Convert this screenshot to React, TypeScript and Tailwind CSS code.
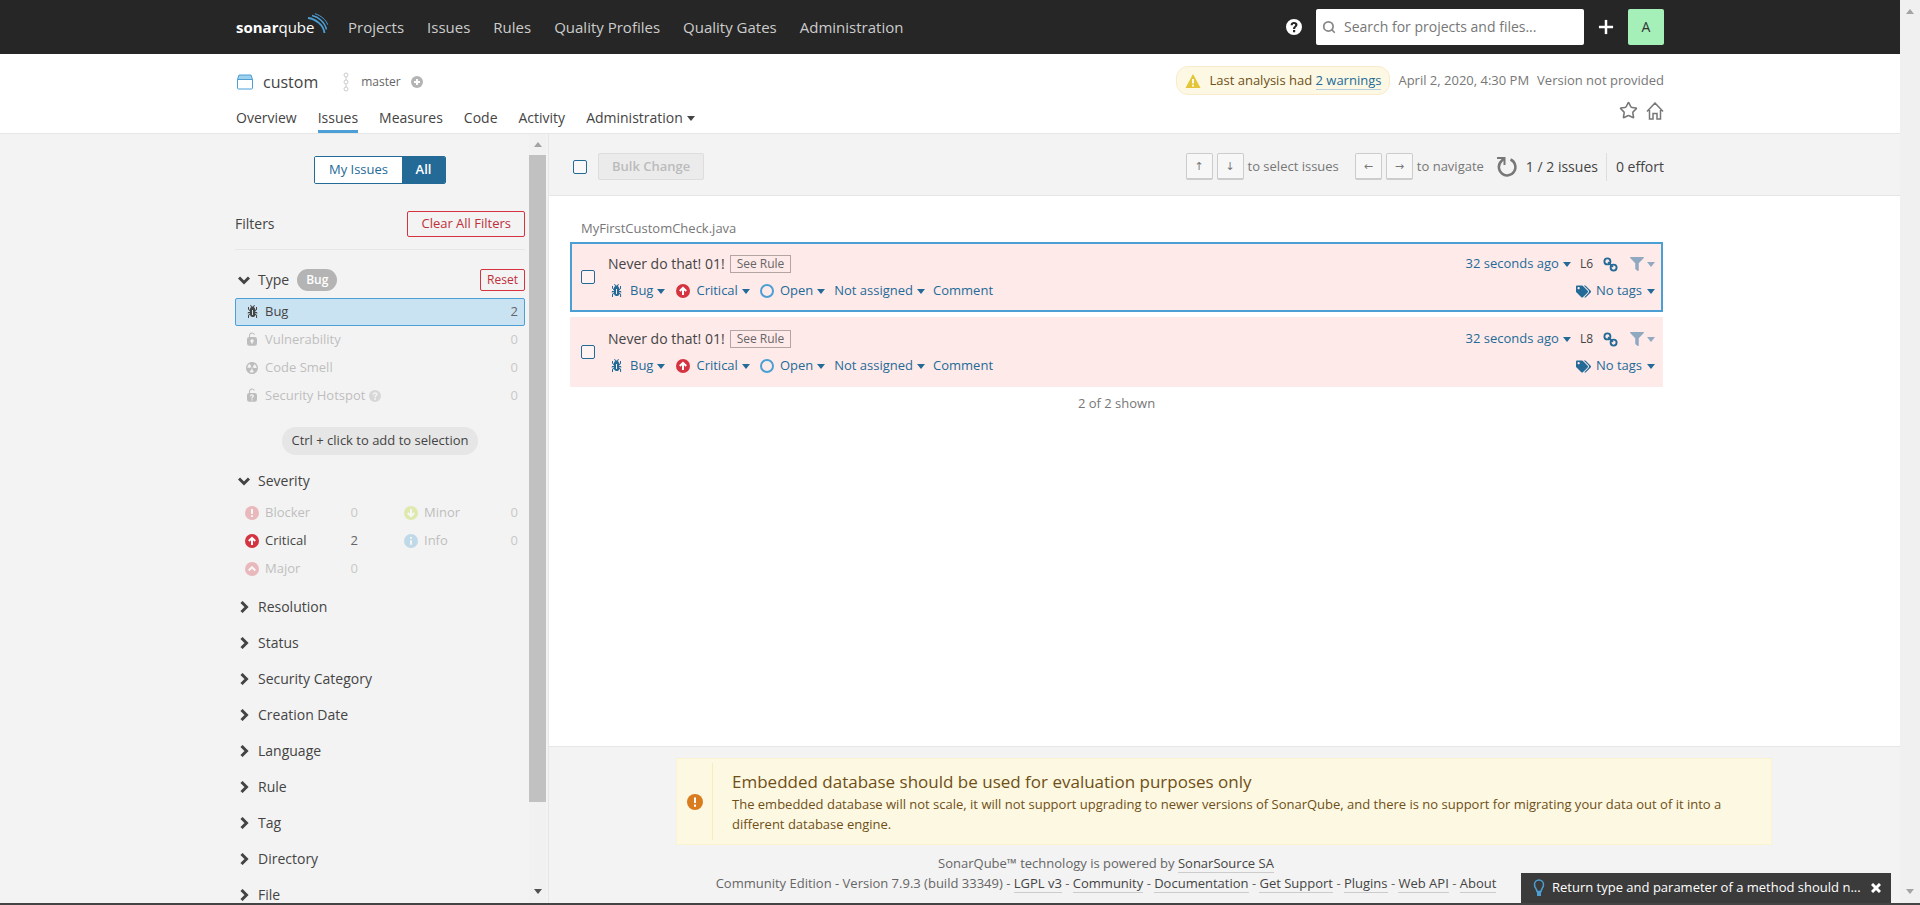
import React, { useState } from 'react';
import { FaFilter, FaTags } from 'react-icons/fa';
import { Search, Plus, Star } from 'lucide-react';

const mainNav = ['Projects', 'Issues', 'Rules', 'Quality Profiles', 'Quality Gates', 'Administration'];
const projectTabs = ['Overview', 'Issues', 'Measures', 'Code', 'Activity'];
const closedFacets = [
  'Resolution',
  'Status',
  'Security Category',
  'Creation Date',
  'Language',
  'Rule',
  'Tag',
  'Directory',
  'File',
];
const footerLinks = ['LGPL v3', 'Community', 'Documentation', 'Get Support', 'Plugins', 'Web API', 'About'];
const issues = [
  { id: 1, message: 'Never do that! 01!', age: '32 seconds ago', line: 'L6' },
  { id: 2, message: 'Never do that! 01!', age: '32 seconds ago', line: 'L8' },
];

type IconProps = { className?: string };

const Svg = ({ className = '', size = 'size-4', children }: IconProps & { size?: string; children: React.ReactNode }) => (
  <svg viewBox="0 0 16 16" className={`shrink-0 ${size} ${className}`} fill="currentColor" aria-hidden="true">
    {children}
  </svg>
);

const BugIcon = () => (
  <Svg>
    <path d="M11 9h1.3l.5.8.8-.5-.8-1.3H11v-.3l2-2.3V3h-1v2l-1 1.2V5c-.1-.8-.7-1.5-1.4-1.9L11 1.8l-.7-.7-1.8 1.6-1.8-1.6-.7.7 1.5 1.3C6.7 3.5 6.1 4.2 6 5v1.1L5 5V3H4v2.3l2 2.3V8H4.2l-.7 1.2.8.5.4-.7H6v.3l-2 1.9V14h1v-2.4l1-1C6 12 7.1 13 8.4 13h.8c.7 0 1.4-.3 1.8-.9.3-.4.3-.9.2-1.4l.9.9V14h1v-2.8l-2-1.9V9zm-2 2H8V6h1v5z" />
  </Svg>
);

const VulnerabilityIcon = () => (
  <Svg>
    <path d="M10.8 5H6V3.9a2.28 2.28 0 0 1 2-2.5 2.22 2.22 0 0 1 1.8 1.2.48.48 0 0 0 .7.2.48.48 0 0 0 .1-.7A3 3 0 0 0 8 .4a3.34 3.34 0 0 0-3 3.5v1.2a2.16 2.16 0 0 0-2 2.1v4.4a2.22 2.22 0 0 0 2.2 2.2h5.6a2.22 2.22 0 0 0 2.2-2.2V7.2A2.22 2.22 0 0 0 10.8 5zm-2.2 5.5v1.2H7.4v-1.2a1.66 1.66 0 0 1-1.1-1.6A1.75 1.75 0 0 1 8 7.2a1.71 1.71 0 0 1 .6 3.3z" />
  </Svg>
);

const CodeSmellIcon = () => (
  <Svg>
    <path d="M8 2C4.7 2 2 4.7 2 8s2.7 6 6 6 6-2.7 6-6-2.7-6-6-6zm-.5 5.5h.9v.9h-.9v-.9zm-3.8.2c-.1 0-.2-.1-.2-.2 0-.4.1-1.2.6-2S5.3 4.2 5.6 4c.2 0 .3 0 .3.1l1.3 2.3c0 .1 0 .2-.1.2-.1.2-.2.3-.3.5-.1.2-.2.4-.2.5 0 .1-.1.2-.2.2l-2.7-.1zM9.9 12c-.3.2-1.1.5-2 .5-.9 0-1.7-.3-2-.5-.1 0-.1-.2-.1-.3l1.3-2.3c0-.1.1-.1.2-.1.2.1.3.1.5.1s.4 0 .5-.1c.1 0 .2 0 .2.1l1.3 2.3c.2.2.2.3.1.3zm2.5-4.1L9.7 8c-.1 0-.2-.1-.2-.2 0-.2-.1-.4-.2-.5 0-.1-.2-.3-.3-.4-.1 0-.1-.1-.1-.2l1.3-2.3c.1-.1.2-.1.3-.1.3.2 1 .7 1.5 1.5s.6 1.6.6 2c0 0-.1.1-.2.1z" />
  </Svg>
);

const HotspotIcon = () => (
  <Svg>
    <path
      fillRule="evenodd"
      d="M10.8 5H6V3.9a2.3 2.3 0 0 1 2-2.5 2.2 2.2 0 0 1 1.8 1.2.5.5 0 0 0 .8-.5A3 3 0 0 0 8 .4a3.3 3.3 0 0 0-3 3.5v1.2a2.2 2.2 0 0 0-2 2.1v4.4a2.2 2.2 0 0 0 2.2 2.2h5.6a2.2 2.2 0 0 0 2.2-2.2V7.2A2.2 2.2 0 0 0 10.8 5zM7.4 11.2h1.2v1.2H7.4zM6 8.2C6 7 6.9 6.3 8 6.3s2 .7 2 1.8c0 1.2-1.4 1.3-1.4 2.3H7.4c0-1.6 1.3-1.6 1.3-2.3 0-.4-.3-.6-.7-.6s-.8.2-.8.7z"
    />
  </Svg>
);

const HelpIcon = ({ size, className }: IconProps & { size?: string }) => (
  <Svg size={size} className={className}>
    <path
      fillRule="evenodd"
      d="M8 0a8 8 0 1 1 0 16A8 8 0 0 1 8 0zM7 11v2.2h2.2V11zM4.6 6.2h2.1c0-.8.5-1.3 1.3-1.3.7 0 1.2.4 1.2 1 0 1.2-2.2 1.4-2.2 3.6v.4h2.1c0-1.7 2.4-1.8 2.4-4.1C11.5 4 10 3 8.1 3 6 3 4.6 4.2 4.6 6.2z"
    />
  </Svg>
);

const severityGlyphs = {
  Blocker: 'M8 4v5M8 10.3v1.7',
  Critical: 'M8 12V5M4.8 8L8 4.8 11.2 8',
  Major: 'M4.7 9.5L8 6.2l3.3 3.3',
  Minor: 'M8 4v7M4.8 8L8 11.2 11.2 8',
  Info: 'M8 4v1.7M8 7.3v4.5',
};

const severityColors = {
  Blocker: 'text-[#d4333f]',
  Critical: 'text-[#d4333f]',
  Major: 'text-[#d4333f]',
  Minor: 'text-[#b0d513]',
  Info: 'text-[#4b9fd5]',
};

type Severity = keyof typeof severityGlyphs;

const SeverityIcon = ({ severity }: { severity: Severity }) => (
  <Svg className={severityColors[severity]}>
    <circle cx="8" cy="8" r="7" />
    <path d={severityGlyphs[severity]} fill="none" stroke="#fff" strokeWidth="2" />
  </Svg>
);

const LinkIcon = () => (
  <Svg size="size-[15px]">
    <g fill="none" stroke="currentColor" strokeWidth="2">
      <circle cx="4.7" cy="4.7" r="3.2" />
      <circle cx="11.3" cy="11.3" r="3.2" />
      <path d="M5.5 5.5l5 5" />
    </g>
  </Svg>
);

const Caret = ({ className = '' }: IconProps) => (
  <svg viewBox="0 0 8 5" className={`h-[5px] w-2 shrink-0 ${className}`} fill="currentColor" aria-hidden="true">
    <path d="M0 0h8L4 5z" />
  </svg>
);

const Chevron = ({ open = false }: { open?: boolean }) => (
  <svg viewBox="0 0 12 12" className="size-3 shrink-0" fill="none" stroke="currentColor" strokeWidth="3" aria-hidden="true">
    <path d={open ? 'M1 3.5l5 5 5-5' : 'M3.5 1l5 5-5 5'} />
  </svg>
);

const Checkbox = ({ label }: { label: string }) => (
  <input
    type="checkbox"
    aria-label={label}
    className="size-[14px] shrink-0 appearance-none rounded-xs border border-[#236a97] bg-white/40 checked:bg-[#236a97]"
  />
);

const Header = () => (
  <header className="h-[54px] shrink-0 bg-[#262626]">
    <div className="mx-auto flex h-full max-w-[1428px] items-center">
      <a href="#" className="mr-5 flex h-6 w-[92px] items-center text-[15px] leading-6 text-white">
        <span className="font-bold">sonar</span>
        <span>qube</span>
        <svg viewBox="0 0 22 20" className="-mt-2 -ml-[7px] h-5 w-[22px] shrink-0" fill="none" stroke="#4b9fd5" aria-hidden="true">
          <path d="M1 5C9 6 16.5 12 17.5 20" strokeWidth="1.8" />
          <path d="M5 2.5c7 1.5 13 7 14.5 14" strokeWidth="1.4" />
          <path d="M8 .7c6 2 11 6 12.7 11" strokeWidth="1" />
        </svg>
      </a>
      <nav className="flex items-center gap-[23px] text-[15px] text-[#ccc]">
        {mainNav.map((item) => (
          <a key={item} href="#">{item}</a>
        ))}
      </nav>
      <div className="ml-auto flex items-center">
        <button aria-label="Help" className="mr-[14px] text-white">
          <HelpIcon />
        </button>
        <label className="flex h-9 w-[268px] items-center gap-2 rounded-xs bg-white px-[6px] text-[#888]">
          <Search className="size-[14px]" strokeWidth={3} />
          <input
            type="text"
            placeholder="Search for projects and files..."
            aria-label="Search for projects and files"
            className="min-w-0 flex-1 text-sm outline-none placeholder:text-[#777]"
          />
        </label>
        <button aria-label="Create" className="mx-3 text-white">
          <Plus className="size-5" strokeWidth={3} strokeLinecap="square" />
        </button>
        <button aria-label="Account" className="size-9 rounded-xs bg-[#a5f0b9] text-sm text-[#333]">A</button>
      </div>
    </div>
  </header>
);

const ProjectHeader = () => (
  <div className="h-20 shrink-0 border-b border-[#e6e6e6] bg-white">
    <div className="mx-auto flex h-full max-w-[1428px] justify-between">
      <div className="flex flex-col justify-between pt-3">
        <div className="flex h-8 items-center">
          <svg viewBox="0 0 18 16" className="mr-[9px] h-4 w-[18px]" fill="none" stroke="#4b9fd5" aria-hidden="true">
            <path d="M3 1h12l1.5 4.5h-15z" fill="#9fd0ec" />
            <path d="M1.5 5.5h15V14q0 1-1 1h-13q-1 0-1-1z" />
          </svg>
          <a href="#" className="mr-6 text-base text-[#444]">custom</a>
          <svg viewBox="0 0 8 20" className="mr-[11px] h-5 w-2" fill="none" stroke="#ccc" aria-hidden="true">
            <circle cx="4" cy="3" r="2" />
            <circle cx="4" cy="10" r="2" />
            <circle cx="4" cy="17" r="2" />
            <path d="M4 5v3M4 12v3" />
          </svg>
          <span className="mr-[10px] text-xs text-[#666]">master</span>
          <svg viewBox="0 0 12 12" className="size-3" aria-hidden="true">
            <circle cx="6" cy="6" r="6" fill="#b4b4b4" />
            <path d="M6 3v6M3 6h6" stroke="#fff" strokeWidth="2" />
          </svg>
        </div>
        <nav className="flex gap-[21px] text-sm text-[#444]">
          {projectTabs.map((tab) => (
            <a
              key={tab}
              href="#"
              className={`h-7 border-b-3 pt-[3px] leading-5 ${tab === 'Issues' ? 'border-[#4b9fd5]' : 'border-transparent'}`}
            >
              {tab}
            </a>
          ))}
          <button className="flex h-[26px] items-center gap-1 leading-5">
            Administration <Caret />
          </button>
        </nav>
      </div>
      <div className="flex flex-col items-end gap-[6px] pt-3 text-[13px] text-[#777]">
        <div className="flex items-center gap-2">
          <div className="flex h-[29px] items-center rounded-xl border border-[#faebcc] bg-[#fcf8e3] px-2 text-[#6f4f17]">
            <svg viewBox="0 0 16 16" className="mr-2 size-4" aria-hidden="true">
              <path d="M8 1l7.5 14H.5z" fill="#e4c538" />
              <path d="M8 6v4.5M8 11.7v1.8" stroke="#fff" strokeWidth="1.8" />
            </svg>
            <span>
              Last analysis had{' '}
              <a href="#" className="border-b border-[#b4cfe0] text-[#236a97]">2 warnings</a>
            </span>
          </div>
          <span>April 2, 2020, 4:30 PM</span>
          <span>Version not provided</span>
        </div>
        <div className="flex gap-2">
          <button aria-label="Favorite"><Star className="size-[19px]" strokeWidth={2} /></button>
          <button aria-label="Homepage">
            <svg viewBox="0 0 18 18" className="size-[18px]" fill="none" stroke="currentColor" strokeWidth="1.5" aria-hidden="true">
              <path d="M1 9.5L9 1l8 8.5M3.5 8v9H7v-5.5h4V17h3.5V8" />
            </svg>
          </button>
        </div>
      </div>
    </div>
  </div>
);

const FacetItem = ({
  icon,
  name,
  count,
  disabled,
  selected,
}: {
  icon: React.ReactNode;
  name: React.ReactNode;
  count: number;
  disabled?: boolean;
  selected?: boolean;
}) => (
  <button
    className={`flex h-7 w-full items-center gap-[5px] border pr-[6px] pl-2 text-[13px] ${
      selected ? 'rounded-xs border-[#4b9fd5] bg-[#cae3f2]' : 'border-transparent'
    } ${disabled ? 'opacity-30' : ''}`}
  >
    {icon}
    <span className="flex items-center gap-1">{name}</span>
    <span className="ml-auto text-[#666]">{count}</span>
  </button>
);

const Sidebar = () => {
  const [mine, setMine] = useState(false);
  const active = 'bg-[#236a97] text-white';
  return (
    <aside className="flex w-[calc(50%-401px)] min-w-[330px] shrink-0 justify-end overflow-hidden border-r border-[#e6e6e6]">
      <div className="flex w-[290px] flex-col overflow-hidden text-[#444]">
        <div className="mx-auto mt-[22px] flex h-7 shrink-0 overflow-hidden rounded-xs border border-[#236a97] text-[13px] font-medium">
          <button onClick={() => setMine(true)} className={`w-[87px] ${mine ? active : 'bg-white text-[#236a97]'}`}>My Issues</button>
          <button onClick={() => setMine(false)} className={`w-[43px] font-semibold ${mine ? 'bg-white text-[#236a97]' : active}`}>All</button>
        </div>
        <div className="mt-[27px] flex shrink-0 items-center justify-between border-b border-[#e6e6e6] pb-3">
          <h2 className="text-sm font-medium">Filters</h2>
          <button className="h-[26px] rounded-xs border border-[#d4333f] px-[13px] text-[13px] text-[#c02f3a]">Clear All Filters</button>
        </div>

        <div className="mt-[19px] flex h-[22px] shrink-0 items-center pl-[3px]">
          <button className="flex items-center gap-2 text-sm font-medium"><Chevron open /> Type</button>
          <span className="ml-2 flex h-[22px] items-center rounded-full bg-[#b4b4b4] px-[9px] text-xs font-semibold text-white">Bug</span>
          <button className="ml-auto h-[22px] rounded-xs border border-[#d4333f] px-[6px] text-xs text-[#c02f3a]">Reset</button>
        </div>
        <div className="mt-[7px] shrink-0">
          <FacetItem icon={<BugIcon />} name="Bug" count={2} selected />
          <FacetItem icon={<VulnerabilityIcon />} name="Vulnerability" count={0} disabled />
          <FacetItem icon={<CodeSmellIcon />} name="Code Smell" count={0} disabled />
          <FacetItem
            icon={<HotspotIcon />}
            name={<>Security Hotspot <HelpIcon size="size-3" className="opacity-50" /></>}
            count={0}
            disabled
          />
        </div>
        <div className="mx-auto mt-[17px] flex h-7 shrink-0 items-center rounded-full bg-[#e6e6e6] px-[9px] text-[13px]">
          Ctrl + click to add to selection
        </div>

        <button className="mt-4 flex h-5 shrink-0 items-center gap-2 pl-[3px] text-sm font-medium">
          <Chevron open /> Severity
        </button>
        <div className="mt-2 grid shrink-0 grid-flow-col grid-cols-[130px_131px] grid-rows-3 justify-between">
          <FacetItem icon={<SeverityIcon severity="Blocker" />} name="Blocker" count={0} disabled />
          <FacetItem icon={<SeverityIcon severity="Critical" />} name="Critical" count={2} />
          <FacetItem icon={<SeverityIcon severity="Major" />} name="Major" count={0} disabled />
          <FacetItem icon={<SeverityIcon severity="Minor" />} name="Minor" count={0} disabled />
          <FacetItem icon={<SeverityIcon severity="Info" />} name="Info" count={0} disabled />
        </div>
        <div className="mt-[6px] shrink-0">
          {closedFacets.map((facet) => (
            <button key={facet} className="flex h-9 w-full items-center gap-2 pl-[3px] text-sm font-medium">
              <Chevron /> {facet}
            </button>
          ))}
        </div>
      </div>
      {/* scroll track */}
      <div className="mr-[2px] ml-1 flex w-[17px] flex-col items-center bg-[#f1f1f1] pt-2 pb-[9px] text-[#505050]">
        <Caret className="mb-2 rotate-180 text-[#a3a3a3]" />
        <div className="h-[86%] w-full bg-[#c1c1c1]" />
        <Caret className="mt-auto" />
      </div>
    </aside>
  );
};

const Key = ({ children }: { children: React.ReactNode }) => (
  <kbd className="flex size-[27px] items-center justify-center rounded-xs border border-b-2 border-[#ccc] bg-[#f7f7f7] font-['Open_Sans','DejaVu_Sans',sans-serif] text-[11px] text-[#777]">
    {children}
  </kbd>
);

const Toolbar = () => (
  <div className="h-[62px] shrink-0 border-b border-[#e6e6e6] bg-[#f3f3f3] pl-[21px]">
    <div className="flex h-full max-w-[1094px] items-center pt-1 pl-[3px] text-[13px] text-[#777]">
      <Checkbox label="Select all issues" />
      <button disabled className="ml-[11px] h-[27px] rounded-xs border border-[#ddd] bg-[#ebebeb] px-[13px] font-semibold text-[#bbb]">
        Bulk Change
      </button>
      <div className="ml-auto flex items-center gap-1">
        <Key>↑</Key>
        <Key>↓</Key>
        <span className="mr-3">to select issues</span>
        <Key>←</Key>
        <Key>→</Key>
        <span>to navigate</span>
      </div>
      <button aria-label="Reload" className="mr-2 ml-3">
        <svg viewBox="0 0 22 22" className="size-[22px]" fill="none" stroke="currentColor" strokeWidth="2.5" aria-hidden="true">
          <path d="M14.5 3.5a8.3 8.3 0 1 1-9 1.5L8 2.5" />
          <path d="M1 2h7.5v7" strokeWidth="2" />
        </svg>
      </button>
      <span className="border-r border-[#ddd] pr-2 text-sm leading-7 text-[#444]">
        <b className="font-medium">1 / 2</b> issues
      </span>
      <span className="pl-[9px] text-sm text-[#444]">
        <b className="font-medium">0</b> effort
      </span>
    </div>
  </div>
);

const IssueBox = ({ issue, selected }: { issue: (typeof issues)[number]; selected: boolean }) => (
  <li
    className={`flex h-[70px] items-center border-2 bg-[#ffeaea] pr-[6px] pl-[9px] text-[13px] text-[#236a97] ${
      selected ? 'border-[#4b9fd5]' : 'border-transparent'
    }`}
  >
    <Checkbox label={`Select issue ${issue.line}`} />
    <div className="ml-[13px] flex flex-1 flex-col gap-[5px] pt-px">
      <div className="flex h-[22px] items-center">
        <span className="text-sm font-medium text-[#444]">{issue.message}</span>
        <button className="ml-[5px] h-[18px] border border-[#b4a5a5] px-[6px] text-xs leading-4 text-[#666]">See Rule</button>
        <button className="ml-auto flex items-center gap-1">{issue.age} <Caret /></button>
        <span className="ml-[9px] text-xs text-[#444]">{issue.line}</span>
        <button aria-label="Permalink" className="ml-[10px]"><LinkIcon /></button>
        <button aria-label="Similar issues" className="ml-3 flex items-center gap-[3px] opacity-50">
          <FaFilter className="size-[14px]" /> <Caret />
        </button>
      </div>
      <div className="flex h-[22px] items-center">
        <button className="flex items-center gap-1"><BugIcon /> <span className="pl-[2px]">Bug</span> <Caret /></button>
        <button className="ml-[10px] flex items-center gap-1"><SeverityIcon severity="Critical" /> <span className="pl-px">Critical</span> <Caret /></button>
        <button className="ml-[9px] flex items-center gap-1">
          <Svg className="text-[#4b9fd5]"><circle cx="8" cy="8" r="6" fill="none" stroke="currentColor" strokeWidth="2" /></Svg>
          <span className="pl-px">Open</span> <Caret />
        </button>
        <button className="ml-[9px] flex items-center gap-1">Not assigned <Caret /></button>
        <button className="ml-2">Comment</button>
        <button className="ml-auto flex items-center gap-[5px]"><FaTags className="size-[15px]" /> No tags <Caret /></button>
      </div>
    </div>
  </li>
);

const Footer = () => (
  <footer className="shrink-0 border-t border-[#e6e6e6] bg-[#f3f3f3] pt-[11px] pb-[10px] text-[13px] leading-5 text-[#666]">
    <div className="mr-32 ml-[127px] flex border border-[#faf3d1] bg-[#fdf8e1] text-[#6f4f17]">
      <div className="my-1 flex w-9 shrink-0 items-center justify-center border-r border-[#f7ecc0] text-[#d97b1f]">
        <Svg>
          <circle cx="8" cy="8" r="8" />
          <path d="M8 3.5v5.5M8 10.5v2.2" stroke="#fff" strokeWidth="2" />
        </Svg>
      </div>
      <div className="px-[19px] pt-[11px] pb-[10px]">
        <h3 className="text-[17px] leading-6">Embedded database should be used for evaluation purposes only</h3>
        <p>
          The embedded database will not scale, it will not support upgrading to newer versions of SonarQube, and there is no
          support for migrating your data out of it into a different database engine.
        </p>
      </div>
    </div>
    <div className="mt-2 max-w-[1114px] text-center">
      <p>
        SonarQube™ technology is powered by <a href="#" className="border-b border-[#ccc] text-[#444]">SonarSource SA</a>
      </p>
      <p>
        Community Edition - Version 7.9.3 (build 33349)
        {footerLinks.map((link) => (
          <React.Fragment key={link}>
            {' - '}
            <a href="#" className="border-b border-[#ccc] text-[#444]">{link}</a>
          </React.Fragment>
        ))}
      </p>
    </div>
  </footer>
);

const Toast = () => (
  <div className="absolute right-[29px] bottom-[2px] flex h-[30px] w-[370px] items-center bg-[#3b3b3b] pr-[10px] pl-3 text-[13px] text-white">
    <svg viewBox="0 0 12 18" className="mr-[7px] h-[18px] w-3 shrink-0" fill="none" stroke="#4b9fd5" strokeWidth="1.5" aria-hidden="true">
      <path d="M4 12.5C4 10 1.5 9 1.5 5.5a4.5 4.5 0 0 1 9 0C10.5 9 8 10 8 12.5z" />
      <path d="M4 14h4M4 16h4" strokeWidth="2" />
    </svg>
    <span className="whitespace-nowrap">Return type and parameter of a method should n...</span>
    <button aria-label="Dismiss" className="ml-auto shrink-0">
      <svg viewBox="0 0 10 10" className="size-[10px]" stroke="#fff" strokeWidth="3" aria-hidden="true">
        <path d="M1 1l8 8M9 1L1 9" />
      </svg>
    </button>
  </div>
);

export default function App() {
  return (
    <div className="relative flex h-screen flex-col overflow-hidden bg-[#f3f3f3] font-['Open_Sans','Noto_Sans',sans-serif]">
      <div className="flex min-h-0 flex-1">
        <div className="flex min-w-0 flex-1 flex-col">
          <Header />
          <ProjectHeader />
          <div className="flex min-h-0 flex-1">
            <Sidebar />
            <main className="flex min-w-0 flex-1 flex-col bg-white">
              <Toolbar />
              <div className="min-h-0 flex-1 pl-[21px] text-[13px] text-[#777]">
                <div className="max-w-[1093px]">
                  <h2 className="pt-[22px] pb-1 pl-[11px] leading-5">MyFirstCustomCheck.java</h2>
                  <ul className="flex flex-col gap-[5px]">
                    {issues.map((issue) => (
                      <IssueBox key={issue.id} issue={issue} selected={issue.id === 1} />
                    ))}
                  </ul>
                  <p className="mt-[6px] text-center leading-5">2 of 2 shown</p>
                </div>
              </div>
              <Footer />
            </main>
          </div>
        </div>
        <div className="flex w-5 flex-col items-center justify-between bg-[#f0f0f0] py-[9px] text-[#a3a3a3]">
          <Caret className="rotate-180" />
          <Caret />
        </div>
      </div>
      <div className="h-[2px] shrink-0 bg-[#444]" />
      <Toast />
    </div>
  );
}
